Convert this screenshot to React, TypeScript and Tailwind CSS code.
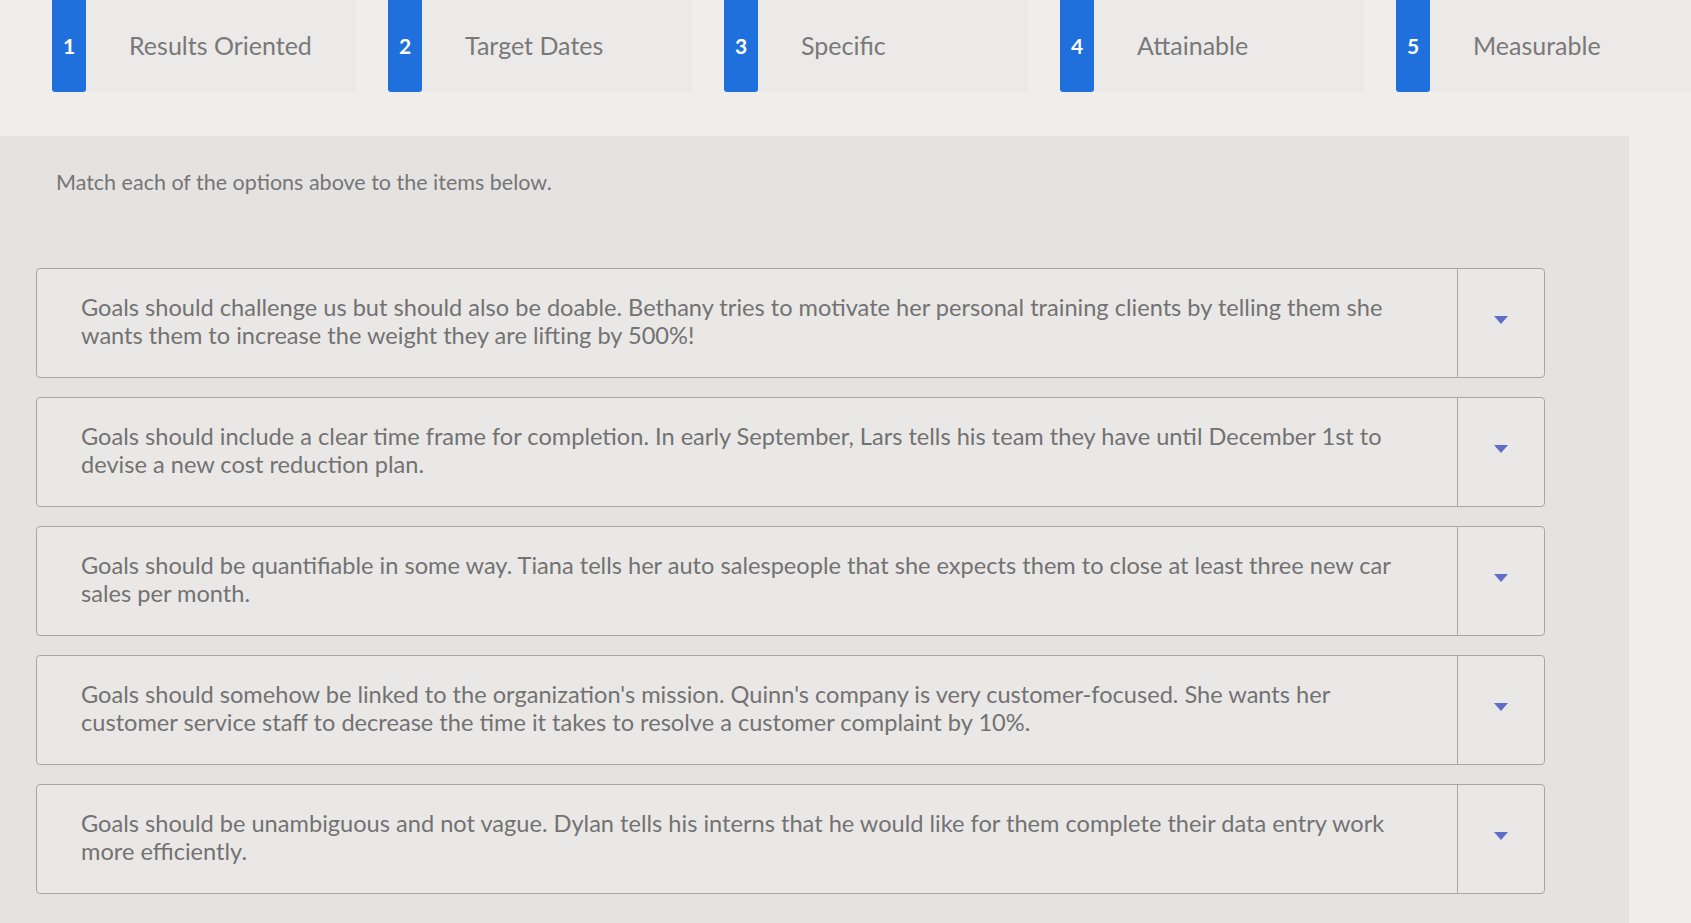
const options = [
  { n: '1', label: 'Results Oriented' },
  { n: '2', label: 'Target Dates' },
  { n: '3', label: 'Specific' },
  { n: '4', label: 'Attainable' },
  { n: '5', label: 'Measurable' },
]

const items = [
  'Goals should challenge us but should also be doable. Bethany tries to motivate her personal training clients by telling them she wants them to increase the weight they are lifting by 500%!',
  'Goals should include a clear time frame for completion. In early September, Lars tells his team they have until December 1st to devise a new cost reduction plan.',
  'Goals should be quantifiable in some way. Tiana tells her auto salespeople that she expects them to close at least three new car sales per month.',
  "Goals should somehow be linked to the organization's mission. Quinn's company is very customer-focused. She wants her customer service staff to decrease the time it takes to resolve a customer complaint by 10%.",
  'Goals should be unambiguous and not vague. Dylan tells his interns that he would like for them complete their data entry work more efficiently.',
]

function Caret() {
  return (
    <svg width="16" height="10" viewBox="0 0 16 10" aria-hidden="true">
      <path d="M1 1h14L8 9z" fill="#5f6cc8" />
    </svg>
  )
}

export default function App() {
  return (
    <div
      className="min-h-[923px] w-full bg-[#efeeec] text-[#717070]"
      style={{ fontFamily: 'Lato, "Open Sans", sans-serif' }}
    >
      <div className="flex h-[136px] items-start pl-[52px]">
        {options.map(option => (
          <div className="flex w-[336px] shrink-0 items-center" key={option.n}>
            <div className="flex h-[92px] w-[34px] shrink-0 items-center justify-center rounded-b-[3px] bg-[#1f6fdc] text-[21px] font-bold text-white">
              {option.n}
            </div>
            <div className="flex h-[92px] w-[270px] items-center bg-[#ebeae8] pl-[43px] text-[25px] text-[#7a7878]">
              {option.label}
            </div>
          </div>
        ))}
      </div>

      <div className="mr-[62px] bg-[#e4e3e1] pb-[40px]">
        <p className="px-[56px] pb-[70px] pt-[30px] text-[21.5px] text-[#767575]">
          Match each of the options above to the items below.
        </p>

        <div className="flex flex-col gap-[19px] pl-[36px] pr-[84px]">
          {items.map(text => (
            <div
              className="flex min-h-[110px] rounded-[4px] border border-[#a8a7a6] bg-[#e9e8e6]"
              key={text.slice(0, 30)}
            >
              <div className="flex-1 border-r border-[#a8a7a6] pb-[28px] pl-[44px] pr-[44px] pt-[24px] text-[23.6px] leading-[28px] text-[#737272]">
                {text}
              </div>
              <div className="flex w-[86px] shrink-0 items-center justify-center pb-[6px]">
                <Caret />
              </div>
            </div>
          ))}
        </div>
      </div>
    </div>
  )
}
